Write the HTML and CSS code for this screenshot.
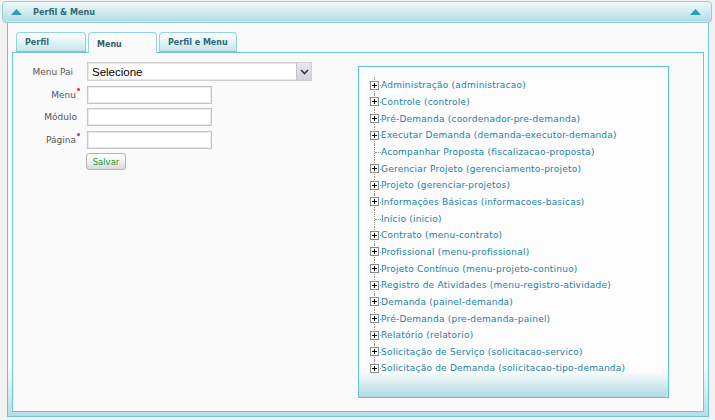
FILE: index.html
```html
<!DOCTYPE html>
<html lang="pt-BR">
<head>
<meta charset="utf-8">
<title>Perfil &amp; Menu</title>
<link rel="stylesheet" href="styles.css">
</head>
<body>
<div class="panel">
  <div class="panel-head">
    <svg class="tri" width="11" height="6" viewBox="0 0 11 6"><polygon points="0,6 5.5,0 11,6" fill="#2b9db1"/></svg>
    <span class="panel-title">Perfil &amp; Menu</span>
    <svg class="tri tri-right" width="11" height="6" viewBox="0 0 11 6"><polygon points="0,6 5.5,0 11,6" fill="#2b9db1"/></svg>
  </div>
  <div class="panel-body">
    <div class="tabs">
      <div class="tab">Perfil</div>
      <div class="tab active">Menu</div>
      <div class="tab">Perfil e Menu</div>
    </div>
    <div class="tab-content">
      <form class="form">
        <label class="lbl lbl-pai">Menu Pai</label>
        <div class="select-wrap">
          <select class="select"><option>Selecione</option></select>
          <span class="select-btn"><svg width="9" height="6" viewBox="0 0 9 6"><path d="M1 1l3.5 3.5L8 1" fill="none" stroke="#2d3550" stroke-width="1.6"/></svg></span>
        </div>
        <label class="lbl req">Menu<span class="star"></span></label>
        <input class="input" type="text">
        <label class="lbl">Módulo</label>
        <input class="input" type="text">
        <label class="lbl req">Página<span class="star"></span></label>
        <input class="input" type="text">
        <span></span>
        <button class="btn" type="button">Salvar</button>
      </form>
      <div class="tree">
        <ul class="tree-list">
          <li class="node"><span class="exp"><svg width="9" height="9" viewBox="0 0 9 9"><rect x=".5" y=".5" width="8" height="8" fill="#fff" stroke="#8a8a8a"/><path d="M2 4.5h5M4.5 2v5" stroke="#000"/></svg></span><a class="txt">Administração (administracao)</a></li>
          <li class="node"><span class="exp"><svg width="9" height="9" viewBox="0 0 9 9"><rect x=".5" y=".5" width="8" height="8" fill="#fff" stroke="#8a8a8a"/><path d="M2 4.5h5M4.5 2v5" stroke="#000"/></svg></span><a class="txt">Controle (controle)</a></li>
          <li class="node"><span class="exp"><svg width="9" height="9" viewBox="0 0 9 9"><rect x=".5" y=".5" width="8" height="8" fill="#fff" stroke="#8a8a8a"/><path d="M2 4.5h5M4.5 2v5" stroke="#000"/></svg></span><a class="txt">Pré-Demanda (coordenador-pre-demanda)</a></li>
          <li class="node"><span class="exp"><svg width="9" height="9" viewBox="0 0 9 9"><rect x=".5" y=".5" width="8" height="8" fill="#fff" stroke="#8a8a8a"/><path d="M2 4.5h5M4.5 2v5" stroke="#000"/></svg></span><a class="txt">Executar Demanda (demanda-executor-demanda)</a></li>
          <li class="node leaf"><span class="exp"></span><a class="txt">Acompanhar Proposta (fiscalizacao-proposta)</a></li>
          <li class="node"><span class="exp"><svg width="9" height="9" viewBox="0 0 9 9"><rect x=".5" y=".5" width="8" height="8" fill="#fff" stroke="#8a8a8a"/><path d="M2 4.5h5M4.5 2v5" stroke="#000"/></svg></span><a class="txt">Gerenciar Projeto (gerenciamento-projeto)</a></li>
          <li class="node"><span class="exp"><svg width="9" height="9" viewBox="0 0 9 9"><rect x=".5" y=".5" width="8" height="8" fill="#fff" stroke="#8a8a8a"/><path d="M2 4.5h5M4.5 2v5" stroke="#000"/></svg></span><a class="txt">Projeto (gerenciar-projetos)</a></li>
          <li class="node"><span class="exp"><svg width="9" height="9" viewBox="0 0 9 9"><rect x=".5" y=".5" width="8" height="8" fill="#fff" stroke="#8a8a8a"/><path d="M2 4.5h5M4.5 2v5" stroke="#000"/></svg></span><a class="txt">Informações Básicas (informacoes-basicas)</a></li>
          <li class="node leaf"><span class="exp"></span><a class="txt">Início (inicio)</a></li>
          <li class="node"><span class="exp"><svg width="9" height="9" viewBox="0 0 9 9"><rect x=".5" y=".5" width="8" height="8" fill="#fff" stroke="#8a8a8a"/><path d="M2 4.5h5M4.5 2v5" stroke="#000"/></svg></span><a class="txt">Contrato (menu-contrato)</a></li>
          <li class="node"><span class="exp"><svg width="9" height="9" viewBox="0 0 9 9"><rect x=".5" y=".5" width="8" height="8" fill="#fff" stroke="#8a8a8a"/><path d="M2 4.5h5M4.5 2v5" stroke="#000"/></svg></span><a class="txt">Profissional (menu-profissional)</a></li>
          <li class="node"><span class="exp"><svg width="9" height="9" viewBox="0 0 9 9"><rect x=".5" y=".5" width="8" height="8" fill="#fff" stroke="#8a8a8a"/><path d="M2 4.5h5M4.5 2v5" stroke="#000"/></svg></span><a class="txt">Projeto Contínuo (menu-projeto-continuo)</a></li>
          <li class="node"><span class="exp"><svg width="9" height="9" viewBox="0 0 9 9"><rect x=".5" y=".5" width="8" height="8" fill="#fff" stroke="#8a8a8a"/><path d="M2 4.5h5M4.5 2v5" stroke="#000"/></svg></span><a class="txt">Registro de Atividades (menu-registro-atividade)</a></li>
          <li class="node"><span class="exp"><svg width="9" height="9" viewBox="0 0 9 9"><rect x=".5" y=".5" width="8" height="8" fill="#fff" stroke="#8a8a8a"/><path d="M2 4.5h5M4.5 2v5" stroke="#000"/></svg></span><a class="txt">Demanda (painel-demanda)</a></li>
          <li class="node"><span class="exp"><svg width="9" height="9" viewBox="0 0 9 9"><rect x=".5" y=".5" width="8" height="8" fill="#fff" stroke="#8a8a8a"/><path d="M2 4.5h5M4.5 2v5" stroke="#000"/></svg></span><a class="txt">Pré-Demanda (pre-demanda-painel)</a></li>
          <li class="node"><span class="exp"><svg width="9" height="9" viewBox="0 0 9 9"><rect x=".5" y=".5" width="8" height="8" fill="#fff" stroke="#8a8a8a"/><path d="M2 4.5h5M4.5 2v5" stroke="#000"/></svg></span><a class="txt">Relatório (relatorio)</a></li>
          <li class="node"><span class="exp"><svg width="9" height="9" viewBox="0 0 9 9"><rect x=".5" y=".5" width="8" height="8" fill="#fff" stroke="#8a8a8a"/><path d="M2 4.5h5M4.5 2v5" stroke="#000"/></svg></span><a class="txt">Solicitação de Serviço (solicitacao-servico)</a></li>
          <li class="node"><span class="exp"><svg width="9" height="9" viewBox="0 0 9 9"><rect x=".5" y=".5" width="8" height="8" fill="#fff" stroke="#8a8a8a"/><path d="M2 4.5h5M4.5 2v5" stroke="#000"/></svg></span><a class="txt">Solicitação de Demanda (solicitacao-tipo-demanda)</a></li>
        </ul>
      </div>
    </div>
  </div>
</div>
</body>
</html>
```
FILE: styles.css
```css
* { box-sizing: border-box; }

html, body {
  margin: 0;
  padding: 0;
  background: #f2f2f2;
  font-family: "DejaVu Sans", Verdana, sans-serif;
}

.panel {
  width: 710px;
  margin: 1px 0 0 2px;
}

.panel-head {
  height: 22px;
  display: flex;
  align-items: center;
  padding: 0 10px 0 8px;
  border: 1px solid #8fd0d9;
  border-radius: 4px;
  background: linear-gradient(to bottom, #eef8f9 0%, #d3edf0 45%, #aedbe2 100%);
  box-shadow: inset 0 -1px 0 #c8eaee;
}

.tri { display: block; flex: none; }
.tri-right { margin-left: auto; }

.panel-title {
  margin-left: 11px;
  font-size: 8.1px;
  font-weight: bold;
  color: #2f6b78;
}

.panel-body {
  width: 702px;
  margin-left: 5px;
  padding: 9px 4px 4px 4px;
  border: 1px solid #6ec6d3;
  border-top: none;
  background: linear-gradient(to bottom, #fafafa 0%, #fafafa calc(100% - 50px), #b4dfe5 100%);
}

.tabs {
  display: flex;
  align-items: flex-end;
  gap: 2px;
  height: 20px;
  padding-left: 4px;
  position: relative;
  z-index: 1;
}

.tab {
  height: 20px;
  min-width: 70px;
  padding: 1px 8px 0;
  display: flex;
  align-items: center;
  border: 1px solid #93d3dc;
  border-bottom-color: #6ec6d3;
  border-radius: 4px 4px 0 0;
  background: linear-gradient(to bottom, #fdfefe 0%, #eaf6f8 40%, #c2e6eb 100%);
  font-size: 8px;
  font-weight: bold;
  color: #2f6b78;
}

.tab.active {
  min-width: 69px;
  height: 21px;
  margin-bottom: -1px;
  padding-top: 3px;
  border-bottom: none;
  background: #fafafa;
  color: #3a5c66;
}

.tab-content {
  height: 360px;
  display: flex;
  padding: 9px 34px 13px 0;
  border: 1px solid #6ec6d3;
  background: #fafafa;
}

.form {
  display: grid;
  grid-template-columns: 68px auto;
  column-gap: 6px;
  row-gap: 4.5px;
  align-content: start;
  align-items: center;
  margin: 0;
}

.lbl {
  text-align: right;
  padding-right: 4px;
  font-size: 9px;
  color: #555;
  line-height: 12px;
}

.lbl-pai { padding-right: 8px; }
.lbl.req { padding-right: 1px; }

.star {
  display: inline-block;
  width: 3px;
  height: 3px;
  margin-left: 1px;
  border-radius: 50%;
  background: #e0313a;
  vertical-align: 7px;
}

.select-wrap {
  position: relative;
  width: 225px;
  height: 19px;
}

.select {
  appearance: none;
  -webkit-appearance: none;
  display: block;
  width: 100%;
  height: 19px;
  margin: 0;
  padding: 0 0 0 4px;
  border: 1px solid #cfcfcf;
  border-radius: 0;
  box-shadow: inset 0 0 0 1px #e6e6e6;
  background: #fff;
  font-family: "Liberation Sans", Arial, sans-serif;
  font-size: 11.5px;
  color: #000;
}

.select-btn {
  position: absolute;
  top: 1px;
  right: 1px;
  width: 15px;
  height: 17px;
  display: flex;
  align-items: center;
  justify-content: center;
  border-left: 1px solid #c2c2c8;
  background: linear-gradient(to bottom, #e6e6ec, #d2d2da);
}

.input {
  display: block;
  width: 125px;
  height: 18px;
  margin: 0;
  padding: 0 3px;
  border: 1px solid #c4c4c4;
  box-shadow: inset 0 0 0 1px #ececec;
  background: #fff;
  font-size: 11px;
}

.btn {
  justify-self: start;
  width: 40px;
  height: 17px;
  margin: 0 0 0 -1px;
  padding: 0;
  border: 1px solid #b3b3b3;
  border-radius: 3px;
  background: linear-gradient(to bottom, #ffffff 0%, #f1f1f1 50%, #d9d9d9 100%);
  font-family: "DejaVu Sans", Verdana, sans-serif;
  font-size: 8.5px;
  color: #1f9c22;
}

.tree {
  width: 311px;
  margin: 4px 0 0 auto;
  border: 1px solid #5fc2d0;
  background: linear-gradient(to bottom, #fcfcfc 0%, #fcfcfc calc(100% - 26px), #b0dce3 100%);
}

.tree-list {
  list-style: none;
  margin: 0;
  padding: 10px 0 0 11px;
}

.node {
  position: relative;
  display: flex;
  align-items: center;
  height: 16.66px;
  font-size: 9px;
  white-space: nowrap;
}

.node::before {
  content: "";
  position: absolute;
  left: 4px;
  top: 0;
  bottom: 0;
  border-left: 1px dotted #8c8c8c;
}

.node:last-child::before { bottom: 50%; }

.node::after {
  content: "";
  position: absolute;
  left: 5px;
  width: 6px;
  top: 50%;
  border-top: 1px dotted #8c8c8c;
}

.exp {
  position: relative;
  z-index: 1;
  flex: none;
  width: 9px;
  height: 9px;
}

.exp svg { display: block; }

.txt {
  position: relative;
  z-index: 1;
  margin-left: 2px;
  color: #2281a3;
  letter-spacing: 0.22px;
}
```
